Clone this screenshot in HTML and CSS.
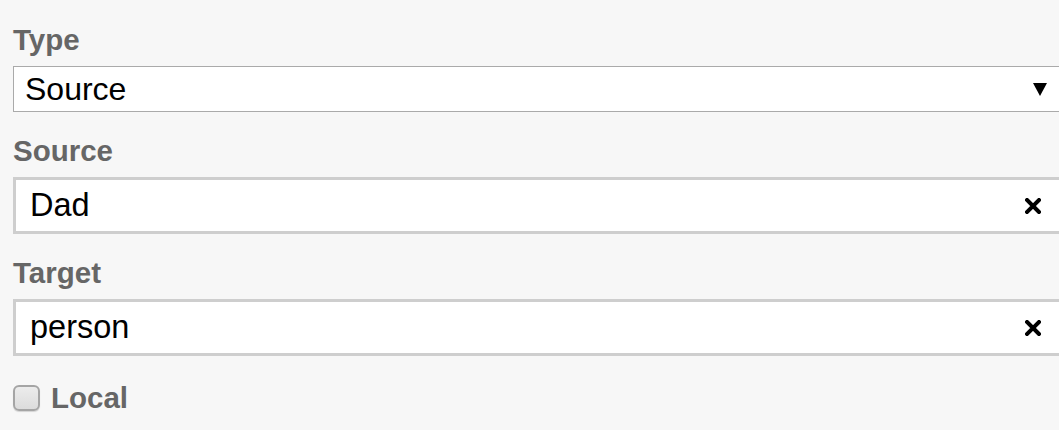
FILE: index.html
```html
<!DOCTYPE html>
<html lang="en">
<head>
    <meta charset="UTF-8">
    <title>Edge settings</title>
    <link rel="stylesheet" href="styles.css">
</head>
<body>

<div class="form">
    <div class="field">
        <label class="field-label">Type</label>
        <div class="select">
            <span class="select-value">Source</span>
            <svg class="select-arrow" width="14" height="14" viewBox="0 0 14 14"><path d="M0 1 H14 L7 14 Z" fill="#000"/></svg>
        </div>
    </div>

    <div class="field">
        <label class="field-label">Source</label>
        <div class="text-box">
            <input class="text-input" type="text" value="Dad">
            <svg class="clear-btn" width="16" height="16" viewBox="0 0 16 16"><path d="M2 2 L14 14 M14 2 L2 14" stroke="#000" stroke-width="4" stroke-linecap="square"/></svg>
        </div>
    </div>

    <div class="field">
        <label class="field-label">Target</label>
        <div class="text-box">
            <input class="text-input" type="text" value="person">
            <svg class="clear-btn" width="16" height="16" viewBox="0 0 16 16"><path d="M2 2 L14 14 M14 2 L2 14" stroke="#000" stroke-width="4" stroke-linecap="square"/></svg>
        </div>
    </div>

    <label class="check-row">
        <input class="check" type="checkbox">
        <span class="check-label">Local</span>
    </label>
</div>

</body>
</html>
```

FILE: styles.css
```css
body {
    margin: 0;
    background: #f7f7f7;
    font-family: 'Liberation Sans', Arial, sans-serif;
    overflow: hidden;
}
.form {
    width: 1070px;
    padding: 24px 0 0 13px;
}
.field { margin-bottom: 23px; }
.field-label {
    display: block;
    font-size: 29.5px;
    font-weight: bold;
    line-height: 32px;
    color: #666;
    margin-bottom: 10px;
}
.select {
    display: flex;
    align-items: center;
    height: 46px;
    box-sizing: border-box;
    background: #fff;
    border: 1px solid #aaa;
    padding: 0 35px 0 11px;
    font-size: 32px;
    color: #000;
}
.select-value { flex: 1; }
.select-arrow { display: block; }
.text-box {
    display: flex;
    align-items: center;
    height: 57px;
    box-sizing: border-box;
    background: #fff;
    border: 3px solid #cecece;
    padding: 0 39px 0 14px;
}
.text-input {
    flex: 1;
    border: none;
    outline: none;
    padding: 0;
    margin: 0;
    background: transparent;
    font-family: 'Liberation Sans', Arial, sans-serif;
    font-size: 32.5px;
    color: #000;
}
.clear-btn { display: block; }
.check-row {
    display: flex;
    align-items: center;
    gap: 11px;
    margin-top: 26px;
}
.check {
    appearance: none;
    -webkit-appearance: none;
    margin: 0;
    width: 27px;
    height: 26px;
    box-sizing: border-box;
    border: 2px solid #a5a5a5;
    border-radius: 6px;
    background: linear-gradient(#ececec, #dcdcdc);
    box-shadow: 0 1px 1px rgba(0,0,0,0.15);
}
.check-label {
    font-size: 29.5px;
    font-weight: bold;
    line-height: 32px;
    color: #666;
}
```
